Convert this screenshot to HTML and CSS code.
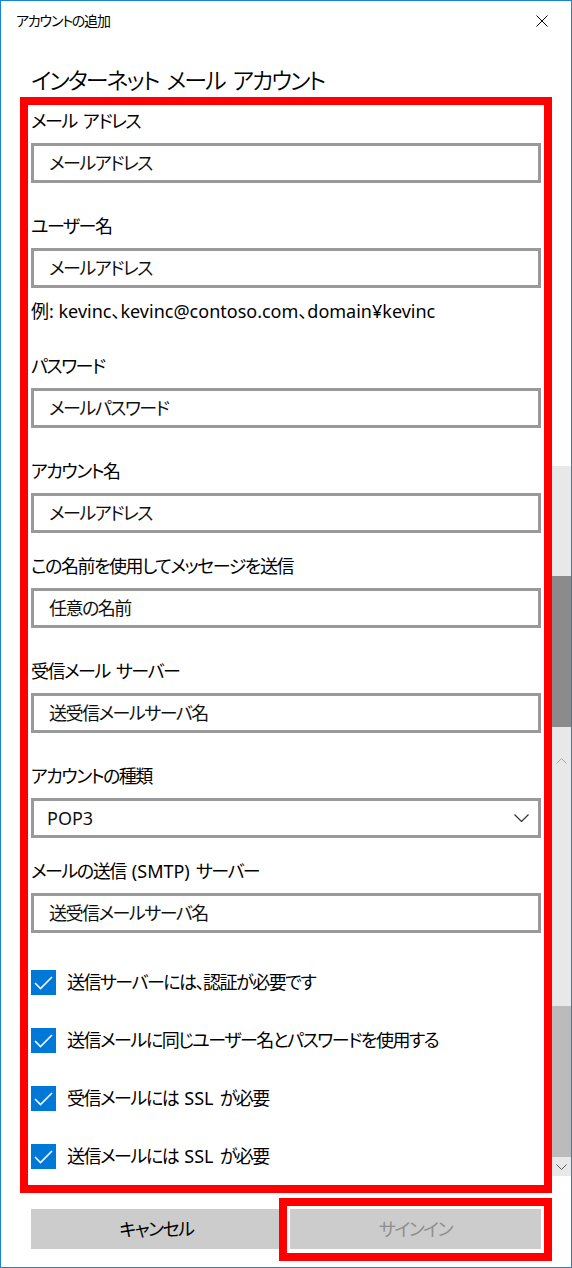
FILE: index.html
```html
<!DOCTYPE html>
<html lang="ja">
<head>
<meta charset="utf-8">
<title>アカウントの追加</title>
<link rel="stylesheet" href="styles.css">
</head>
<body>
<div class="window">
  <div class="main">
    <div class="titlebar">
      <span class="title">アカウントの追加</span>
      <svg class="close" width="12" height="12" viewBox="0 0 12 12"><path d="M0.5 0.5 L11.5 11.5 M11.5 0.5 L0.5 11.5" stroke="#000" stroke-width="1" fill="none"/></svg>
    </div>
    <h1 class="heading">インターネット メール アカウント</h1>
    <div class="frame">
      <div class="field first">
        <div class="label">メール アドレス</div>
        <div class="textbox">メールアドレス</div>
      </div>
      <div class="field">
        <div class="label">ユーザー名</div>
        <div class="textbox">メールアドレス</div>
      </div>
      <div class="hint">例: kevinc、kevinc@contoso.com、domain¥kevinc</div>
      <div class="field">
        <div class="label">パスワード</div>
        <div class="textbox">メールパスワード</div>
      </div>
      <div class="field">
        <div class="label">アカウント名</div>
        <div class="textbox">メールアドレス</div>
      </div>
      <div class="field tight">
        <div class="label">この名前を使用してメッセージを送信</div>
        <div class="textbox">任意の名前</div>
      </div>
      <div class="field">
        <div class="label">受信メール サーバー</div>
        <div class="textbox">送受信メールサーバ名</div>
      </div>
      <div class="field">
        <div class="label">アカウントの種類</div>
        <div class="textbox combo">
          <span class="lat">POP3</span>
          <svg class="chev" width="15" height="8" viewBox="0 0 15 8"><path d="M0.5 0.5 L7.5 7.5 L14.5 0.5" stroke="#333" stroke-width="1.2" fill="none"/></svg>
        </div>
      </div>
      <div class="field tight">
        <div class="label">メールの送信 <span class="lat">(SMTP)</span> サーバー</div>
        <div class="textbox">送受信メールサーバ名</div>
      </div>
      <div class="checks">
        <div class="check">
          <svg class="box" width="25" height="25" viewBox="0 0 25 25"><rect width="25" height="25" fill="#0078d7"/><path d="M4 13 L9.5 18.5 L21 7" stroke="#fff" stroke-width="1.6" fill="none"/></svg>
          <span>送信サーバーには、認証が必要です</span>
        </div>
        <div class="check">
          <svg class="box" width="25" height="25" viewBox="0 0 25 25"><rect width="25" height="25" fill="#0078d7"/><path d="M4 13 L9.5 18.5 L21 7" stroke="#fff" stroke-width="1.6" fill="none"/></svg>
          <span>送信メールに同じユーザー名とパスワードを使用する</span>
        </div>
        <div class="check">
          <svg class="box" width="25" height="25" viewBox="0 0 25 25"><rect width="25" height="25" fill="#0078d7"/><path d="M4 13 L9.5 18.5 L21 7" stroke="#fff" stroke-width="1.6" fill="none"/></svg>
          <span>受信メールには <span class="lat">SSL</span> が必要</span>
        </div>
        <div class="check">
          <svg class="box" width="25" height="25" viewBox="0 0 25 25"><rect width="25" height="25" fill="#0078d7"/><path d="M4 13 L9.5 18.5 L21 7" stroke="#fff" stroke-width="1.6" fill="none"/></svg>
          <span>送信メールには <span class="lat">SSL</span> が必要</span>
        </div>
      </div>
    </div>
    <div class="buttons">
      <div class="btn">キャンセル</div>
      <div class="btn-wrap">
        <div class="btn disabled">サインイン</div>
        <div class="highlight"></div>
      </div>
    </div>
  </div>
  <div class="scrollbar">
    <div class="sb-blank"></div>
    <div class="sb-track sb-a"></div>
    <div class="sb-thumb-dark"></div>
    <div class="sb-track sb-b">
      <svg class="sb-arrow up" width="11" height="6" viewBox="0 0 11 6"><path d="M0.5 5.5 L5.5 0.5 L10.5 5.5" stroke="#a6a6a6" stroke-width="1" fill="none"/></svg>
    </div>
    <div class="sb-thumb-light"></div>
    <div class="sb-track sb-c">
      <svg class="sb-arrow down" width="11" height="6" viewBox="0 0 11 6"><path d="M0.5 0.5 L5.5 5.5 L10.5 0.5" stroke="#606060" stroke-width="1" fill="none"/></svg>
    </div>
  </div>
</div>
</body>
</html>
```

FILE: styles.css
```css
* {
  box-sizing: border-box;
}

html,
body {
  margin: 0;
  padding: 0;
  background: #ffffff;
}

body {
  font-family: "Noto Sans", "Noto Sans CJK JP", sans-serif;
  font-feature-settings: "palt";
  color: #000000;
}

.lat {
  letter-spacing: 0;
}

.window {
  width: 572px;
  height: 1268px;
  border: 1px solid #1883d7;
  display: flex;
  background: #ffffff;
  overflow: hidden;
}

.main {
  width: 551px;
  display: flex;
  flex-direction: column;
}

.titlebar {
  height: 39px;
  display: flex;
  align-items: center;
  justify-content: space-between;
  padding: 0 4px 0 15px;
}

.title {
  font-size: 14px;
  line-height: 20px;
  letter-spacing: -1.2px;
}

.close {
  display: block;
}

.heading {
  margin: 24px 0 1px 30px;
  font-size: 23px;
  line-height: 32px;
  font-weight: 350;
  letter-spacing: -2px;
  word-spacing: 4px;
}

.frame {
  margin-left: 19px;
  width: 532px;
  border: 8px solid #ff0000;
  padding: 4px 3px 16px;
}

.field {
  margin-top: 31px;
}

.field.first {
  margin-top: 0;
}

.field.tight {
  margin-top: 21px;
}

.label {
  font-size: 18px;
  line-height: 24px;
  letter-spacing: -1.5px;
  word-spacing: 3px;
  margin-bottom: 10px;
}

.textbox {
  height: 40px;
  border: 3px solid #999999;
  padding: 0 15px;
  font-size: 18px;
  line-height: 34px;
  letter-spacing: -1.5px;
  color: #111111;
}

.textbox.combo {
  display: flex;
  align-items: center;
  justify-content: space-between;
  padding: 0 9px 0 13px;
}

.chev {
  display: block;
}

.hint {
  margin-top: 11px;
  font-size: 18px;
  line-height: 24px;
}

.checks {
  margin-top: 37px;
  display: flex;
  flex-direction: column;
  gap: 33px;
}

.check {
  display: flex;
  align-items: center;
  gap: 11px;
  height: 25px;
  font-size: 18px;
  line-height: 25px;
  letter-spacing: -1.5px;
  word-spacing: 3px;
}

.box {
  display: block;
  flex: none;
}

.buttons {
  margin: 16px 0 0 30px;
  width: 510px;
  display: grid;
  grid-template-columns: 1fr 1fr;
  gap: 8px;
}

.btn {
  height: 40px;
  background: #cccccc;
  font-size: 18px;
  line-height: 40px;
  letter-spacing: -1.5px;
  text-align: center;
  color: #000000;
}

.btn.disabled {
  color: #8f8f8f;
}

.btn-wrap {
  position: relative;
}

.highlight {
  position: absolute;
  top: -11px;
  left: -11px;
  right: -11px;
  bottom: -12px;
  border: 8px solid #ff0000;
}

.scrollbar {
  width: 19px;
  display: flex;
  flex-direction: column;
}

.sb-blank {
  height: 465px;
}

.sb-track {
  background: #e8e8e8;
  display: flex;
  justify-content: center;
}

.sb-a {
  height: 110px;
}

.sb-thumb-dark {
  height: 151px;
  background: #8b8b8b;
}

.sb-b {
  height: 279px;
  align-items: flex-start;
}

.sb-arrow {
  display: block;
}

.sb-arrow.up {
  margin-top: 31px;
}

.sb-thumb-light {
  height: 151px;
  background: #bbbbbb;
}

.sb-c {
  height: 19px;
  align-items: center;
}
```
